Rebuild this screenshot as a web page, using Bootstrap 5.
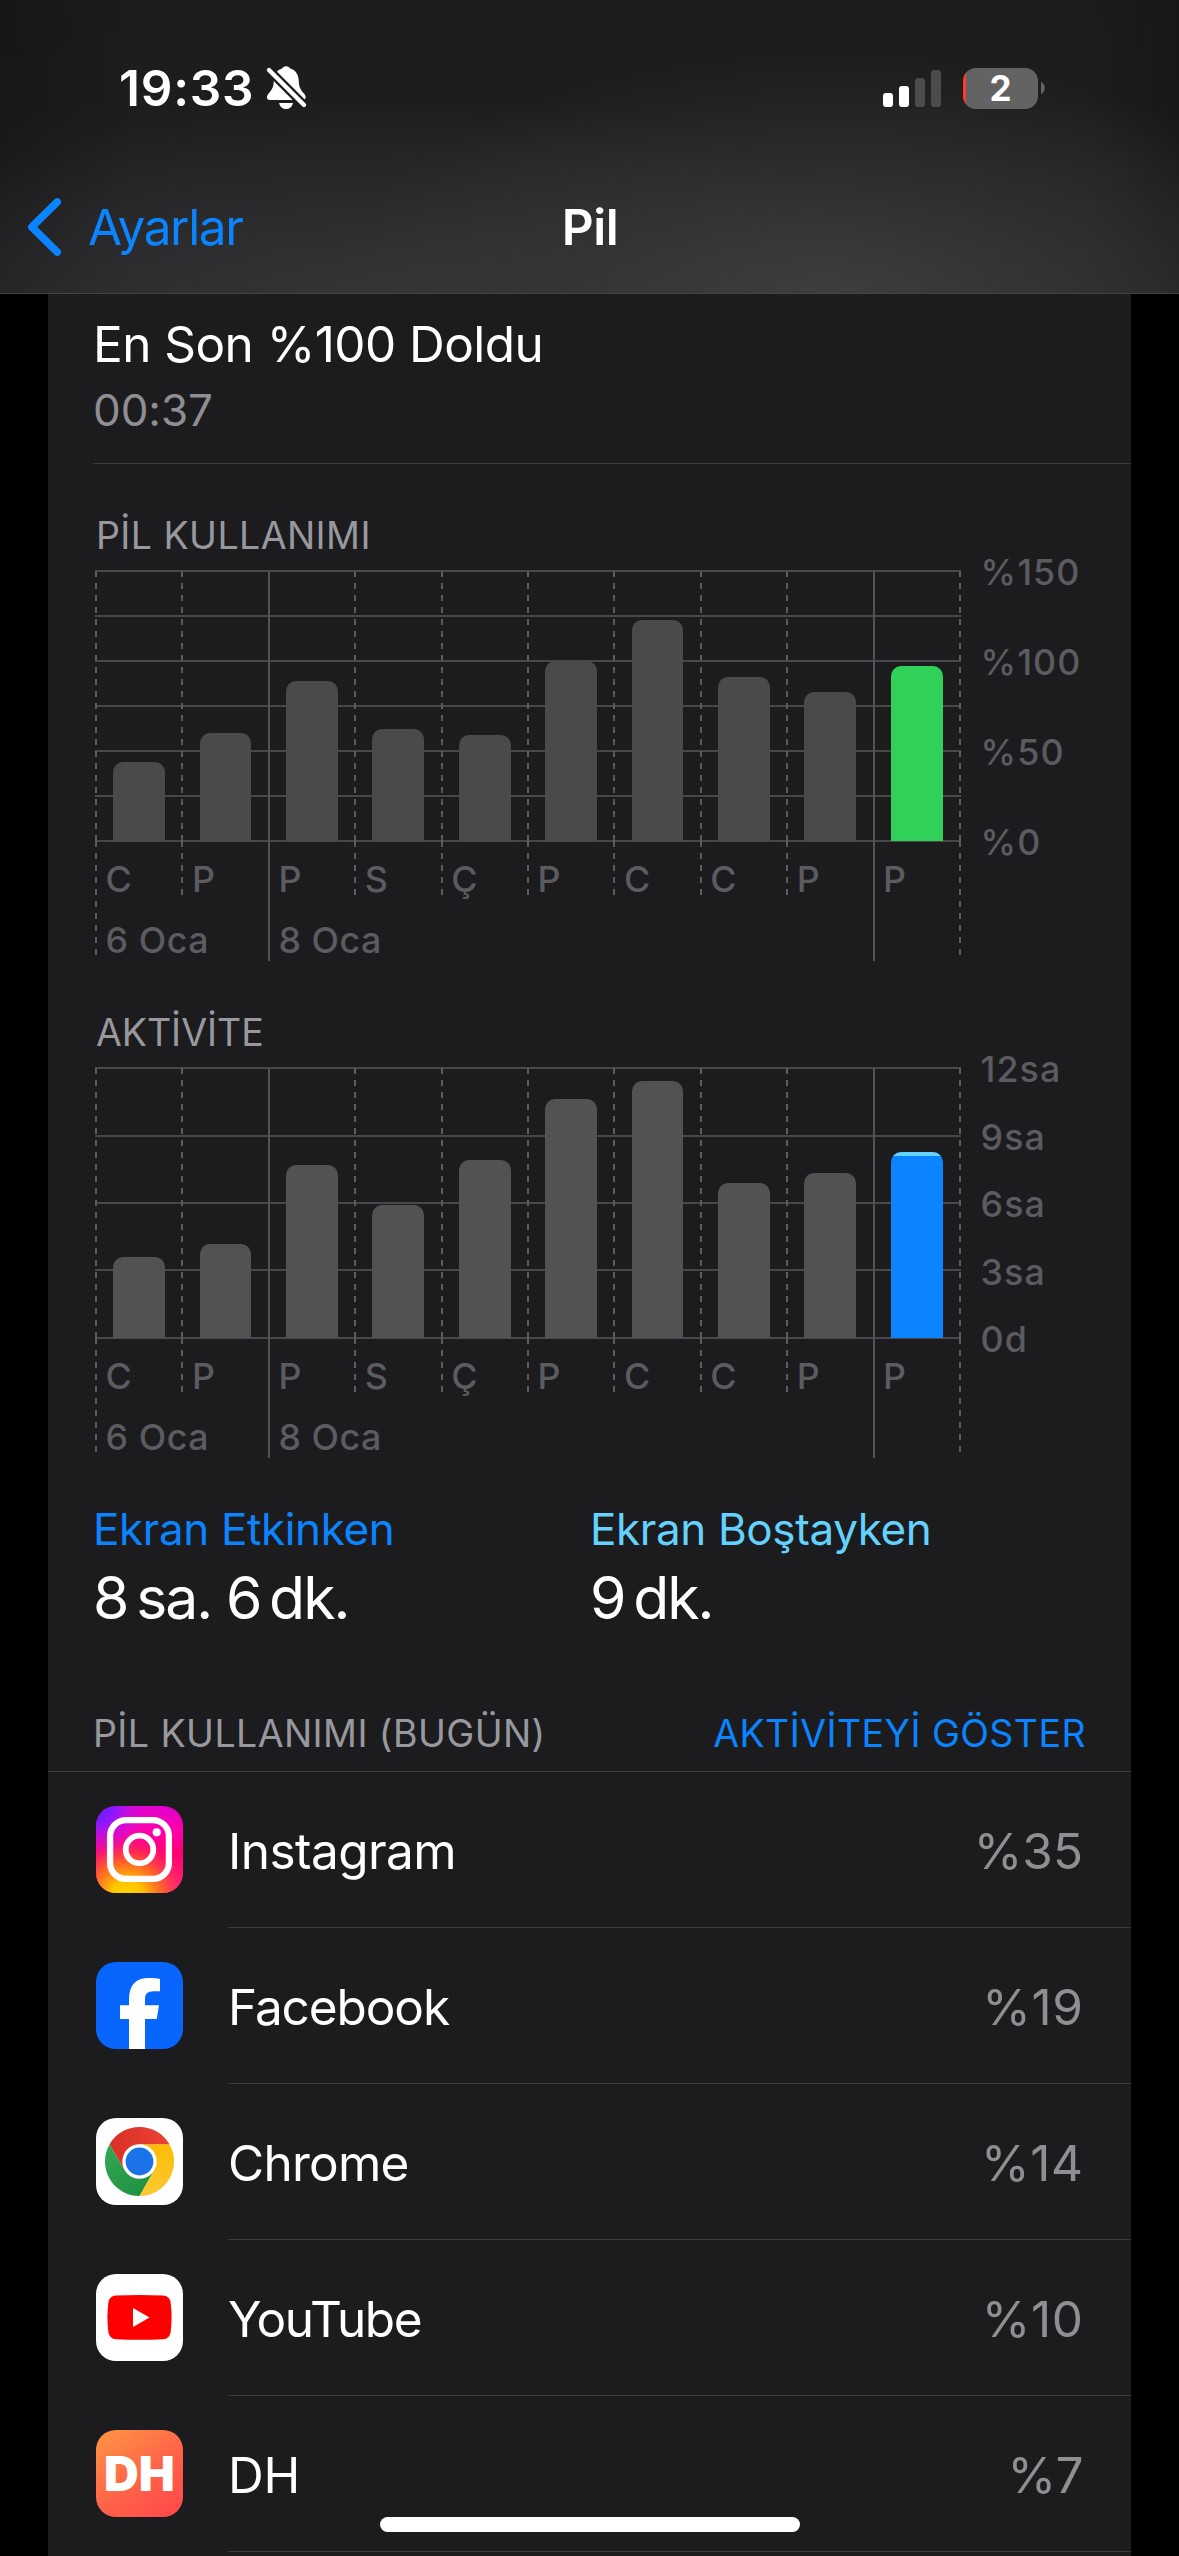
<!DOCTYPE html>
<html lang="tr" data-bs-theme="dark">
<head>
<meta charset="utf-8">
<meta name="viewport" content="width=device-width, initial-scale=1">
<title>Pil</title>
<link href="https://cdn.jsdelivr.net/npm/bootstrap@5.3.0/dist/css/bootstrap.min.css" rel="stylesheet">
<style>
  :root { --ios-blue:#0a84ff; --ios-cyan:#64d2ff; --ios-gray:#8e8e93; --panel:#1c1c1e; --rule:#3c3c3f; --axis:#5b5b60; }
  body { background:#000; color:#fff; font-family:Inter,"Liberation Sans",sans-serif; height:2556px; overflow:hidden; font-size:49.5px; line-height:66px; }
  svg { display:block; }
  .top-area { height:294px; border-bottom:1px solid #434345;
    background:
      radial-gradient(ellipse 500px 260px at 830px 310px, rgba(66,66,69,.85), rgba(58,58,61,.5) 50%, transparent),
      radial-gradient(ellipse 560px 210px at 400px 310px, rgba(58,58,60,.75), rgba(54,54,56,.4) 50%, transparent),
      linear-gradient(90deg, rgba(0,0,0,.2), transparent 12%, transparent 92%, rgba(0,0,0,.18)),
      linear-gradient(#1c1c1c, #1d1d1e 35%, #29292b); }
  .status-row { height:176px; padding:0 134px 0 119px; }
  .clock { letter-spacing:.8px; font-weight:600; margin-right:11px; }
  .batt { width:75px; height:41px; border-radius:13px; background:linear-gradient(90deg,#ff3b30 3px,#636363 3px); font-size:35px; line-height:41px; font-weight:700; margin-left:22px; margin-right:3px; }
  .nav-row { height:102px; display:grid; grid-template-columns:1fr auto 1fr; align-items:center; padding:0 26px; }
  .back-link { color:var(--ios-blue); letter-spacing:-1.36px; gap:24px; text-decoration:none; }
  .nav-title { font-weight:600; letter-spacing:-.4px; padding-left:1px; }
  .panel { margin:0 48px; background:var(--panel); height:2262px; overflow:hidden; }
  .last-full { margin-left:45px; padding:17px 0 20px; border-bottom:1px solid var(--rule); height:170px; }
  .last-title { letter-spacing:-.55px; }
  .last-time { font-size:44px; color:var(--ios-gray); letter-spacing:-.1px; }
  .cap-label { font-size:37.5px; line-height:40px; color:#98989f; }
  .chart-block { padding-left:47px; }
  .first-chart { padding-top:52px; }
  .chart-block .cap-label { letter-spacing:.42px; margin-bottom:14px; padding-left:1px; }
  .chart-block.act .cap-label { letter-spacing:-.05px; padding-left:1px; }
  .plot { width:866px; height:392px; font-size:35.8px; line-height:40px; color:var(--axis); letter-spacing:.55px; font-weight:450; }
  .lines-6 { background:repeating-linear-gradient(#48484b 0 2px, transparent 2px 45px) 0 0/100% 272px no-repeat; }
  .lines-4 { background:repeating-linear-gradient(#48484b 0 2px, transparent 2px 67.5px) 0 0/100% 272px no-repeat; }
  .day-col { width:86.4px; flex:none; }
  .edge-col { width:2px; flex:none; }
  .cell-top { height:271px; padding-left:18.2px; }
  .cell-low { height:55px; padding:18px 0 0 10.6px; white-space:nowrap; }
  .dash { background:repeating-linear-gradient(#5c5c60 0 6px, transparent 6px 12px) 0 0/2px 100% no-repeat; }
  .cell-top.dash { background-position:0 1px; }
  .cell-low.tall { height:115px; }
  .cell-low.tall-line { height:120px; }
  .line { background:linear-gradient(#535357,#535357) 0 0/2px 100% no-repeat; }
  .cell-top.line { background-position:0 1px; }
  .day-bar { width:51.8px; border-radius:10px 10px 0 0; background:#4a4a4a; }
  .act .day-bar { background:#525252; }
  .day-bar.now-green { background:#30d158; }
  .act .day-bar.now-blue { background:linear-gradient(var(--ios-cyan) 4px, var(--ios-blue) 4px); }
  .date-tag { margin-top:21px; }
  .y-axis { height:310px; margin:-18px 0 0 19.5px; font-size:35.8px; line-height:40px; color:var(--axis); letter-spacing:1.1px; font-weight:450; }
  .second-chart { margin-top:51px; }
  .totals { padding-left:45px; margin-top:40px; }
  .total-item { width:497px; }
  .total-name { font-size:44px; line-height:60px; letter-spacing:-.38px; }
  .total-value { font-size:58.8px; line-height:76px; letter-spacing:-1.95px; padding-top:1px; }
  .section-head { margin-top:78px; padding:0 45px 17px 45px; border-bottom:1px solid var(--rule); }
  .section-head .cap-label { letter-spacing:.42px; }
  .app-row { padding-left:48px; gap:45px; height:156px; }
  .app-icon { width:87px; height:87px; flex:none; margin-bottom:1px; }
  .app-body { height:156px; border-bottom:1px solid var(--rule); padding:2px 48px 0 0; }
  .pct { color:var(--ios-gray); }
  .home-bar { position:absolute; left:380px; top:2517px; width:420px; height:15px; border-radius:8px; background:#fff; }
</style>
<script src="https://cdn.jsdelivr.net/npm/bootstrap@5.3.0/dist/js/bootstrap.bundle.min.js"></script>
</head>
<body class="position-relative">

<header class="top-area">
  <div class="status-row d-flex align-items-center">
    <span class="clock">19:33</span>
    <svg width="44" height="46" viewBox="0 0 44 46" aria-hidden="true">
      <g fill="#fff"><path d="M21 1.3C19 1.3 17.8 2.2 17.2 3.6C11.8 5 9 9.5 8.8 15C8.6 22 7.500 24 3.600 28.500C.8 32 1.500 35 5 35H37.500C41 35 41.800 32 39 28.500C35 24 34 22 33.700 15C33.400 9.500 30.500 5 25.200 3.600C24.500 2.200 23 1.300 21 1.300Z"/><path d="M14 38H28C27 42 24.500 44 21 44S15 42 14 38Z"/></g>
      <path d="M1.500 2.500L41 42" stroke="#1d1d1e" stroke-width="9"/>
      <path d="M4 5L39 40" stroke="#fff" stroke-width="4.400" stroke-linecap="round"/>
    </svg>
    <svg class="ms-auto" width="58" height="37" viewBox="0 0 58 37" aria-hidden="true">
      <rect y="23" width="10" height="14" rx="3" fill="#fff"/><rect x="16" y="16" width="10" height="21" rx="3" fill="#fff"/>
      <rect x="32" y="8" width="10" height="29" rx="3" fill="#4b4b4c"/><rect x="48" y="0" width="10" height="37" rx="3" fill="#4b4b4c"/>
    </svg>
    <span class="batt text-center">2</span>
    <svg width="4" height="12" viewBox="0 0 4 12" aria-hidden="true"><path d="M0 0C5 2 5 10 0 12Z" fill="#636363"/></svg>
  </div>
  <nav class="nav-row">
    <a href="#" class="back-link d-flex align-items-center">
      <svg width="38" height="60" viewBox="0 0 38 60" fill="none" stroke="#0a84ff" stroke-width="7.500" stroke-linecap="round" stroke-linejoin="round" aria-hidden="true"><path d="M31.200 5L5.800 30L31.200 55"/></svg>
      <span>Ayarlar</span>
    </a>
    <span class="nav-title">Pil</span>
  </nav>
</header>

<main class="panel">
  <div class="last-full">
    <div class="last-title">En Son %100 Doldu</div>
    <div class="last-time">00:37</div>
  </div>

  <section class="chart-block first-chart">
    <div class="cap-label">PİL KULLANIMI</div>
    <div class="d-flex align-items-start">
      <div class="plot lines-6 d-flex" data-chart="79,108,160,112,106,180,221,164,149,175" data-now="now-green"></div>
      <div class="y-axis d-flex flex-column justify-content-between"><span>%150</span><span>%100</span><span>%50</span><span>%0</span></div>
    </div>
  </section>

  <section class="chart-block act second-chart">
    <div class="cap-label">AKTİVİTE</div>
    <div class="d-flex align-items-start">
      <div class="plot lines-4 d-flex" data-chart="81,94,173,133,178,239,257,155,165,186" data-now="now-blue"></div>
      <div class="y-axis d-flex flex-column justify-content-between"><span>12sa</span><span>9sa</span><span>6sa</span><span>3sa</span><span>0d</span></div>
    </div>
  </section>

  <section class="totals d-flex">
    <div class="total-item">
      <div class="total-name" style="color:var(--ios-blue)">Ekran Etkinken</div>
      <div class="total-value">8&#8201;sa. 6&#8201;dk.</div>
    </div>
    <div>
      <div class="total-name" style="color:var(--ios-cyan)">Ekran Boştayken</div>
      <div class="total-value">9&#8201;dk.</div>
    </div>
  </section>

  <div class="section-head d-flex justify-content-between">
    <span class="cap-label">PİL KULLANIMI (BUGÜN)</span>
    <span class="cap-label" style="color:var(--ios-blue)">AKTİVİTEYİ GÖSTER</span>
  </div>

  <div class="app-list">
    <div class="app-row d-flex align-items-center">
      <svg class="app-icon" viewBox="0 0 87 87" aria-hidden="true">
        <defs>
          <linearGradient id="ig1" x1="0" y1="0" x2="0" y2="1"><stop offset="0" stop-color="#e000d0"/><stop offset=".3" stop-color="#ff00a8"/><stop offset=".55" stop-color="#ff0070"/><stop offset="1" stop-color="#ff2a80"/></linearGradient>
          <radialGradient id="ig2" cx=".35" cy="1.05" r=".75"><stop offset="0" stop-color="#ffd800"/><stop offset=".25" stop-color="#ffc400"/><stop offset=".55" stop-color="#ff6a20" stop-opacity=".9"/><stop offset="1" stop-color="#ff1070" stop-opacity="0"/></radialGradient>
          <radialGradient id="ig3" cx="0" cy="0" r=".6"><stop offset="0" stop-color="#5a20ff"/><stop offset=".35" stop-color="#8a18ff"/><stop offset="1" stop-color="#e010e0" stop-opacity="0"/></radialGradient>
        </defs>
        <rect width="87" height="87" rx="20" fill="url(#ig1)"/><rect width="87" height="87" rx="20" fill="url(#ig2)"/><rect width="87" height="87" rx="20" fill="url(#ig3)"/>
        <g fill="none" stroke="#fff"><rect x="14.100" y="14.100" width="58.800" height="58.800" rx="16" stroke-width="6.300"/><circle cx="43.500" cy="43.500" r="13.800" stroke-width="5.800"/></g>
        <circle cx="60.700" cy="26.300" r="4.100" fill="#fff"/>
      </svg>
      <div class="app-body d-flex flex-grow-1 align-items-center justify-content-between"><span style="letter-spacing:-.55px">Instagram</span><span class="pct">%35</span></div>
    </div>
    <div class="app-row d-flex align-items-center">
      <svg class="app-icon" viewBox="0 0 87 87" aria-hidden="true">
        <rect width="87" height="87" rx="20" fill="#0866ff"/>
        <path d="M33 87V57H24V43.300H33V38C33 23 39.500 16 53 16C57.500 16 61.500 16.300 64 17V29.300H58C51 29.300 49 32 49 38V43.300H63L60.700 57H49V87Z" fill="#fff"/>
      </svg>
      <div class="app-body d-flex flex-grow-1 align-items-center justify-content-between"><span style="letter-spacing:-1.1px">Facebook</span><span class="pct" style="letter-spacing:.6px;margin-right:-.6px">%19</span></div>
    </div>
    <div class="app-row d-flex align-items-center">
      <svg class="app-icon" viewBox="0 0 87 87" aria-hidden="true">
        <defs><linearGradient id="cr" x1="0" x2="1"><stop offset="0" stop-color="#d93025"/><stop offset="1" stop-color="#ea4335"/></linearGradient><linearGradient id="cy" x1="0" y1="1" x2="0" y2="0"><stop offset="0" stop-color="#fcc934"/><stop offset="1" stop-color="#fbbc04"/></linearGradient><linearGradient id="cg" x1="1" y1="1" x2="0" y2="0"><stop offset="0" stop-color="#1e8e3e"/><stop offset="1" stop-color="#34a853"/></linearGradient></defs>
        <rect width="87" height="87" rx="20" fill="#fff"/>
        <path d="M43.500 78A34.500 34.500 0 0 1 13.600 26.250L28.600 52.100L58.400 52.100Z" fill="url(#cg)"/>
        <path d="M73.400 26.250A34.500 34.500 0 0 1 43.500 78L58.400 52.100L43.500 26.250Z" fill="url(#cy)"/>
        <path d="M13.600 26.250A34.500 34.500 0 0 1 73.400 26.250H43.500L28.600 52.100Z" fill="url(#cr)"/>
        <circle cx="43.500" cy="43.500" r="17.200" fill="#fff"/><circle cx="43.500" cy="43.500" r="13.900" fill="#1a73e8"/>
      </svg>
      <div class="app-body d-flex flex-grow-1 align-items-center justify-content-between"><span style="letter-spacing:-.75px">Chrome</span><span class="pct" style="letter-spacing:.6px;margin-right:-.6px">%14</span></div>
    </div>
    <div class="app-row d-flex align-items-center">
      <svg class="app-icon" viewBox="0 0 87 87" aria-hidden="true">
        <rect width="87" height="87" rx="20" fill="#fff"/>
        <path d="M20 21.600Q43.500 20.400 67 21.600Q73.500 22 74.600 28.500Q76.600 43.400 74.600 58.200Q73.500 64.800 67 65.200Q43.500 66.400 20 65.200Q13.500 64.800 12.400 58.200Q10.400 43.400 12.400 28.500Q13.500 22 20 21.600Z" fill="#f00"/>
        <path d="M37 34L53.500 43.500L37 53Z" fill="#fff"/>
      </svg>
      <div class="app-body d-flex flex-grow-1 align-items-center justify-content-between"><span style="letter-spacing:-1.4px">YouTube</span><span class="pct" style="letter-spacing:.6px;margin-right:-.6px">%10</span></div>
    </div>
    <div class="app-row d-flex align-items-center">
      <svg class="app-icon" viewBox="0 0 87 87" aria-hidden="true">
        <defs><linearGradient id="dh" x1=".05" y1="0" x2=".8" y2="1"><stop offset="0" stop-color="#ff9544"/><stop offset=".6" stop-color="#ff6248"/><stop offset="1" stop-color="#ff4b4b"/></linearGradient></defs>
        <rect width="87" height="87" rx="20" fill="url(#dh)"/>
        <text x="43.300" y="60.800" text-anchor="middle" font-family="Inter, sans-serif" font-size="48" font-weight="900" fill="#fff">DH</text>
      </svg>
      <div class="app-body d-flex flex-grow-1 align-items-center justify-content-between"><span style="letter-spacing:-.2px">DH</span><span class="pct" style="letter-spacing:-.5px">%7</span></div>
    </div>
  </div>
</main>

<div class="home-bar"></div>

<script>
  const days = ['C', 'P', 'P', 'S', 'Ç', 'P', 'C', 'C', 'P', 'P'];
  const dates = { 0: '6 Oca', 2: '8 Oca' };
  document.querySelectorAll('[data-chart]').forEach(plot => {
    const heights = plot.dataset.chart.split(',');
    plot.innerHTML = heights.map((h, i) => {
      const solid = i === 2 || i === 9;
      const rule = solid ? 'line' : 'dash';
      const low = solid ? 'tall-line' : i === 0 ? 'tall' : '';
      const now = i === 9 ? plot.dataset.now : '';
      const date = dates[i] ? `<div class="date-tag">${dates[i]}</div>` : '';
      return `<div class="day-col"><div class="cell-top ${rule} d-flex align-items-end"><div class="day-bar ${now}" style="height:${h}px"></div></div><div class="cell-low ${rule} ${low}"><div>${days[i]}</div>${date}</div></div>`;
    }).join('') + '<div class="edge-col"><div class="cell-top dash p-0"></div><div class="cell-low dash tall p-0"></div></div>';
  });
</script>
</body>
</html>
